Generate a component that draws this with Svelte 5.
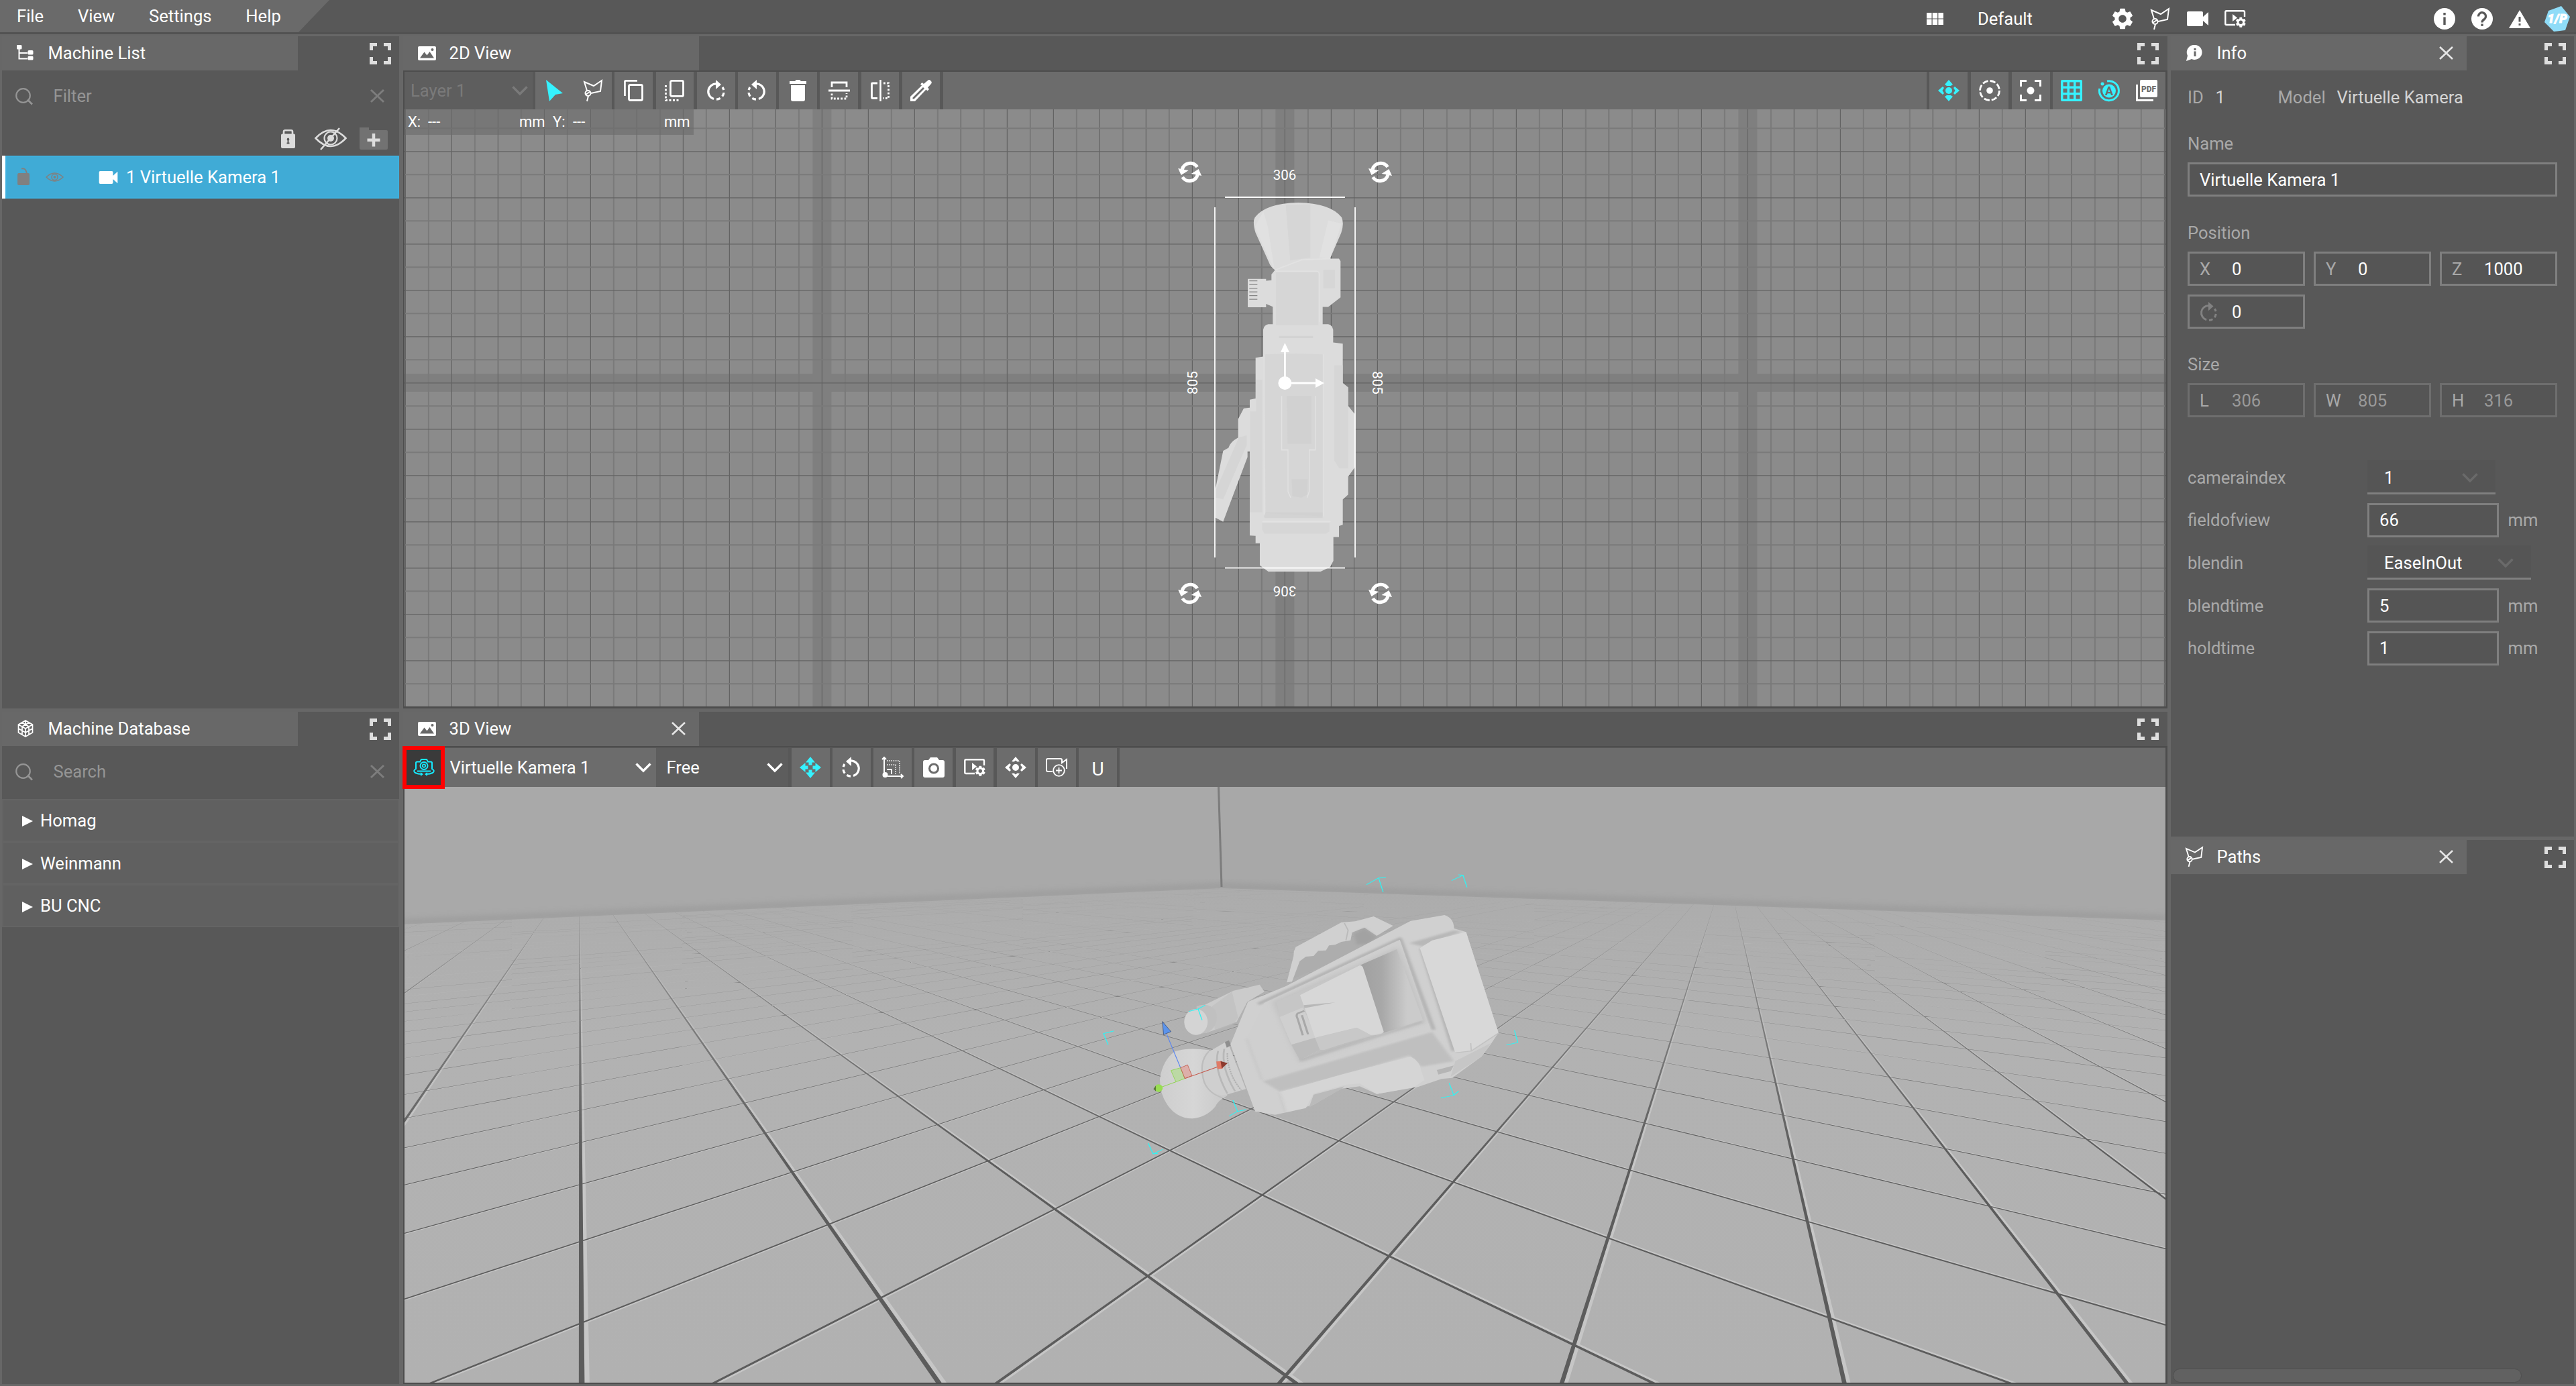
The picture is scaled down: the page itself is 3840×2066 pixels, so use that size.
<script>
  // Icons: [viewBox, width, height, markup]
  const S = 'fill="none" stroke="currentColor"';
  const F = 'fill="currentColor"';
  const gear = 'M19.14 12.94c.04-.3.06-.61.06-.94 0-.32-.02-.64-.07-.94l2.03-1.58c.18-.14.23-.41.12-.61l-1.92-3.32c-.12-.22-.37-.29-.59-.22l-2.39.96c-.5-.38-1.03-.7-1.62-.94l-.36-2.54c-.04-.24-.24-.41-.48-.41h-3.84c-.24 0-.43.17-.47.41l-.36 2.54c-.59.24-1.13.57-1.62.94l-2.39-.96c-.22-.08-.47 0-.59.22L2.74 8.87c-.12.21-.08.47.12.61l2.03 1.58c-.05.3-.09.63-.09.94s.02.64.07.94l-2.03 1.58c-.18.14-.23.41-.12.61l1.92 3.32c.12.22.37.29.59.22l2.39-.96c.5.38 1.03.7 1.62.94l.36 2.54c.05.24.24.41.48.41h3.84c.24 0 .44-.17.47-.41l.36-2.54c.59-.24 1.13-.56 1.62-.94l2.39.96c.22.08.47 0 .59-.22l1.92-3.32c.12-.22.07-.47-.12-.61l-2.01-1.58zM12 15.6c-1.98 0-3.6-1.62-3.6-3.6s1.62-3.6 3.6-3.6 3.6 1.62 3.6 3.6-1.62 3.6-3.6 3.6z';
  const b32 = '0 0 32 32';
  const rotate = `<path ${S} stroke-width="3.2" d="M17 6A11.5 11.5 0 0 0 13 28.5"/><path ${F} d="M16 0L24 7L16 14Z"/><path ${S} stroke-width="3.2" stroke-dasharray="6 4" d="M17 29.2A11.6 11.6 0 0 0 26 11"/>`;
  const lasso = `<path ${S} stroke-width="2" d="M7 16L3 3L17 9L29 1L27 17L13 20M9 24L7 32M5 22L11 18"/><circle ${S} stroke-width="2" cx="8.5" cy="20" r="4"/>`;
  const icons = {
    gear: ['2 2 20 20', 32, 32, `<path ${F} d="${gear}"/>`],
    path: [b32, 32, 32, lasso],
    paths: ['2 1 28 31', 26, 29, lasso],
    video: ['0 0 32 22', 32, 22, `<path ${F} d="M2 0H22Q24 0 24 2V8L32 1V21L24 14V20Q24 22 22 22H2Q0 22 0 20V2Q0 0 2 0Z"/>`],
    playgear: ['0 0 32 26', 32, 26, `<path ${S} stroke-width="2.4" d="M16 22H3Q1.3 22 1.3 20.500V3Q1.300 1.300 3 1.300H28Q30 1.300 30 3V10"/><path ${F} d="M12 6L19 11.500L12 17Z"/><g transform="translate(16.500 10.500) scale(.78) translate(-2 -2)"><path ${F} d="${gear}"/></g>`],
    info: [b32, 32, 32, `<circle cx="16" cy="16" r="16" ${F}/><path fill="#585858" d="M14.300 7h3.400v3.600h-3.400zM14.300 13.500h3.400V25h-3.400z"/>`],
    help: [b32, 32, 32, `<circle cx="16" cy="16" r="16" ${F}/><path fill="none" stroke="#585858" stroke-width="3.2" d="M10.500 12.500A5.500 5.500 0 1 1 19.500 16.500Q16 18.500 16 21.500"/><path fill="#585858" d="M14.400 23.500h3.300v3.400h-3.300z"/>`],
    warn: ['0 0 32 27', 32, 27, `<path ${F} d="M16 0L32 27H0Z"/><path fill="#585858" d="M14.500 10h3v7.500h-3zM14.500 20h3v3h-3z"/>`],
    logo: ['0 0 38 38', 38, 38, `<path fill="#8fdcf8" d="M25 0L38 16L31 36L14 38L0 24L6 7Z"/><text x="19" y="25" text-anchor="middle" font-family="Roboto" font-weight="900" font-style="italic" font-size="18" fill="#fff" stroke="#fff" textLength="29">1/P</text>`],
    apps: ['0 0 25 18', 25, 18, `<path ${F} d="M0 0h7.500v8.400H0zM8.700 0h7.500v8.400H8.700zM17.400 0H25v8.400h-7.600zM0 9.600h7.500V18H0zM8.700 9.600h7.500V18H8.700zM17.400 9.600H25V18h-7.600z"/>`],
    full: [b32, 32, 32, `<path ${S} stroke-width="5" d="M2.500 11V2.500H11M21 2.500H29.500V11M29.500 21V29.500H21M11 29.500H2.500V21"/>`],
    tree: ['0 0 26 24', 26, 24, `<path ${F} d="M1 0h5q1.500 0 1.500 1.500V5Q7.500 6.500 6 6.500H1Q0 6.500 0 5V1Q0 0 1 0zM18 8h5q1.500 0 1.500 1.500v3.500q0 1.500-1.500 1.500h-5q-1.500 0-1.500-1.500V9.500Q16.500 8 18 8zM18 16.500h5q1.500 0 1.500 1.500v3q0 1.500-1.500 1.500h-5q-1.500 0-1.500-1.500v-3q0-1.500 1.500-1.500z"/><path ${S} stroke-width="2" d="M3.500 6V20.500H16M4 12H16"/>`],
    image: ['0 0 27 21', 27, 21, `<path ${F} fill-rule="evenodd" d="M2 0H25Q27 0 27 2V19Q27 21 25 21H2Q0 21 0 19V2Q0 0 2 0ZM3 17.500H24L17.500 8L13.500 13.500L9.500 8.500ZM21.500 3A2 2 0 1 0 21.500 7A2 2 0 1 0 21.500 3Z"/>`],
    cube: ['0 0 26 26', 26, 26, `<path ${S} stroke-width="1.700" d="M13 1L23.500 7V19L13 25L2.500 19V7ZM2.500 7L13 13L23.500 7M13 13V25M7.700 4L18 10V22M18.300 4L8 10V22M2.500 13L13 19L23.500 13M13 1V7"/>`],
    bubble: ['0 0 26 24', 26, 24, `<path ${F} d="M14 0A11 11 0 1 1 9 21L1 24L3 16A11 11 0 0 1 14 0Z"/><path fill="#686868" d="M12.500 5h3v3h-3zM12.500 9.500h3V17h-3z"/>`],
    close: ['0 0 21 20', 21, 20, `<path ${S} stroke-width="2.600" d="M1 1L20 19M20 1L1 19"/>`],
    clear: ['0 0 21 20', 21, 20, `<path ${S} stroke-width="3" d="M1 1L20 19M20 1L1 19"/>`],
    search: ['0 0 26 25', 26, 25, `<ellipse ${S} stroke-width="2.200" cx="11.500" cy="11.500" rx="10.300" ry="10.300"/><path ${S} stroke-width="2.600" d="M18 17.500L25 24.500"/>`],
    lock: ['0 0 21 28', 21, 28, `<path ${S} stroke-width="2.600" d="M4 8V3Q4 1.300 6 1.300H15Q17 1.300 17 3V8"/><path ${F} fill-rule="evenodd" d="M2 6.500H19Q21 6.500 21 8.500V26Q21 28 19 28H2Q0 28 0 26V8.500Q0 6.500 2 6.500ZM10.500 12.500A2.300 2.300 0 0 0 9.500 16.500V19.500H8.500V21.500H12.500V19.500H11.500V16.500A2.300 2.300 0 0 0 10.500 12.500Z"/>`],
    eyeoff: ['0 0 48 34', 48, 34, `<path ${S} stroke-width="2.600" d="M1.500 16Q24-8 46.500 16Q24 40 1.500 16ZM37 1L9 33"/><circle ${S} stroke-width="2.200" cx="24" cy="16" r="9.500"/><circle ${F} cx="24" cy="16" r="5"/>`],
    folder: ['0 0 42 33', 42, 33, `<path fill="#727272" d="M0 0H14V4H40Q42 4 42 6V31Q42 33 40 33H2Q0 33 0 31Z"/><path stroke="currentColor" stroke-width="4.500" d="M21 9V28.500M11.500 18.700H30.500"/>`],
    unlock: ['0 0 18 24', 18, 24, `<path ${F} d="M0 9Q0 6 2 6H16Q18 6 18 8V22Q18 24 16 24H2Q0 24 0 22Z"/><path ${S} stroke-width="2" d="M6 -.500Q13-2.500 14 8"/>`],
    eye: ['0 0 27 14', 27, 14, `<path ${S} stroke-width="1.500" d="M1 7Q13.500-5 26 7Q13.500 19 1 7Z"/><circle ${S} stroke-width="1.500" cx="13.500" cy="7" r="4.500"/><circle ${F} cx="13.500" cy="7" r="2"/>`],
    cursor: ['0 0 25 32', 25, 32, `<path ${F} d="M0 0L25 20L14 22L5 32Z"/>`],
    copy: ['0 0 29 32', 29, 32, `<path ${S} stroke-width="2.800" d="M1.400 24V3Q1.400 1.400 3 1.400H20"/><rect ${S} stroke-width="2.800" x="7.500" y="7.500" width="20" height="23" rx="2"/>`],
    front: ['0 0 29 32', 29, 32, `<rect ${S} stroke-width="2.800" x="8.500" y="1.400" width="19" height="23" rx="2"/><path ${S} stroke-width="2.800" stroke-dasharray="3 2.500" d="M1.500 8V30.500H21"/>`],
    rcw: [b32, 32, 32, rotate],
    rccw: [b32, 32, 32, `<g transform="matrix(-1 0 0 1 32 0)">${rotate}</g>`],
    trash: ['0 0 25 32', 25, 32, `<path ${F} d="M8 2L10 0H15L17 2H25V6H0V2ZM2 8H23V29Q23 32 20 32H5Q2 32 2 29Z"/>`],
    flipv: ['0 0 32 28', 32, 28, `<path ${S} stroke-width="2.800" d="M5 9V2H27V9"/><path ${S} stroke-width="3" d="M0 14H32"/><path ${S} stroke-width="2.800" stroke-dasharray="2.800 2.400" d="M5 18.500V26H27V18"/>`],
    fliph: ['0 0 28 32', 28, 32, `<path ${S} stroke-width="2.800" d="M10 5H3Q1.500 5 1.500 6V26Q1.500 27.500 3 27.500H10"/><path ${S} stroke-width="2.600" d="M14.500 0V32"/><path ${S} stroke-width="2.800" stroke-dasharray="2.800 2.500" d="M19 5H26.500V27.500H18"/>`],
    dropper: [b32, 32, 32, `<path ${F} fill-rule="evenodd" d="M26 1Q28-1 30 1Q33 3.500 31 6L26 11.500L28 14L25.500 16.500L23.500 14.500L7 32H0V25L17 8.500L15 6.500L17.500 4L20 6ZM19 11L3.500 26.500V28.500H5.500L21 13Z"/>`],
    pan: [b32, 32, 32, `<circle ${F} cx="16" cy="16" r="5"/><path ${F} d="M16 0L22 7L18.500 7.500L16 5.500L13.500 7.500L10 7ZM16 32L22 25L18.500 24.500L16 26.500L13.500 24.500L10 25ZM0 16L7 10L9 12L6 16L9 20L7 22ZM32 16L25 10L23 12L26 16L23 20L25 22Z"/>`],
    move: [b32, 32, 32, `<circle ${F} cx="16" cy="16" r="5"/><path ${F} d="M16 0L22 7L19 9H13L10 7ZM16 32L22 25L19 23H13L10 25ZM0 16L7 10L9 12L6.500 16L9 20L7 22ZM32 16L25 10L23 12L25.500 16L23 20L25 22Z"/>`],
    arrows: [b32, 32, 32, `<path ${F} d="M16 0L23 8.500H18.500V12.500H13.500V8.500H9ZM16 32L23 23.500H18.500V19.500H13.500V23.500H9ZM0 16L8.500 9V13.500H12.500V18.500H8.500V23ZM32 16L23.500 9V13.500H19.500V18.500H23.500V23Z"/>`],
    target: [b32, 32, 32, `<circle ${F} cx="16" cy="16" r="4.800"/><circle ${S} stroke-width="2.800" cx="16" cy="16" r="14.500" stroke-dasharray="8.400 3"/>`],
    focus: [b32, 32, 32, `<circle ${F} cx="16" cy="16" r="5.500"/><path ${S} stroke-width="3" d="M1.500 10V1.500H10M22 1.500H30.500V10M30.500 22V30.500H22M10 30.500H1.500V22"/>`],
    grid: [b32, 32, 32, `<path ${F} fill-rule="evenodd" d="M2 0H30Q32 0 32 2V30Q32 32 30 32H2Q0 32 0 30V2Q0 0 2 0ZM3.500 3.500V9.500H9.500V3.500ZM13 3.500V9.500H19V3.500ZM22.500 3.500V9.500H28.500V3.500ZM3.500 13V19H9.500V13ZM13 13V19H19V13ZM22.500 13V19H28.500V13ZM3.500 22.500V28.500H9.500V22.500ZM13 22.500V28.500H19V22.500ZM22.500 22.500V28.500H28.500V22.500Z"/>`],
    auto: [b32, 32, 32, `<path ${S} stroke-width="3" d="M13 2A14.500 14.500 0 1 1 1.800 13"/><circle ${F} cx="6" cy="6" r="2.500"/><circle ${F} cx="16" cy="16.500" r="10"/><text x="16" y="23" text-anchor="middle" font-family="Roboto" font-weight="700" font-size="18" fill="#6c6c6c">A</text>`],
    pdf: [b32, 32, 32, `<path ${F} d="M8 0H30Q32 0 32 2V24Q32 26 30 26H8Q6 26 6 24V2Q6 0 8 0Z"/><path ${S} stroke-width="2.800" d="M1.500 7V30.500H26"/><text x="19" y="17.500" text-anchor="middle" font-family="Roboto" font-weight="900" font-size="12" fill="#6c6c6c">PDF</text>`],
    measure: [b32, 32, 32, `<path ${S} stroke-width="2" d="M3 24V1M0 4L3 1L6 4M8 29H31M28 26L31 29L28 32"/><circle ${F} cx="4.500" cy="27" r="4"/><path ${S} stroke-width="1.600" stroke-dasharray="1.600 1.600" d="M7 6H26V26M7 12H20V26"/><path ${S} stroke-width="1.800" d="M7 19H14V26"/>`],
    photo: ['0 0 32 30', 32, 30, `<path ${F} fill-rule="evenodd" d="M11 0H21L24 4H29Q32 4 32 7V27Q32 30 29 30H3Q0 30 0 27V7Q0 4 3 4H8ZM16 8.500A8 8 0 1 0 16 24.500A8 8 0 1 0 16 8.500Z"/><circle ${F} cx="16" cy="16.500" r="5"/>`],
    camplus: ['0 0 32 28', 32, 28, `<path ${S} stroke-width="2" d="M10 20H3Q1 20 1 18V3Q1 1 3 1H22Q24 1 24 3V7L31 2V16"/><circle ${S} stroke-width="1.800" cx="19.500" cy="18.500" r="8.300"/><path ${S} stroke-width="1.800" d="M19.500 14V23M15 18.500H24"/>`],
    camera3d: ['0 0 32 26', 32, 26, `<path ${S} stroke-width="2" d="M4 16V6Q4 4.500 6 4.500H10L12 1H20L22 4.500H26Q28 4.500 28 6V16M4 15Q-1 18 3 21Q7 23 13 23M28 15Q33 18 29 21Q25 23 19 23M6 18.500H26"/><ellipse ${S} stroke-width="2" cx="16" cy="10.500" rx="5.500" ry="5.500"/><circle ${S} stroke-width="1.700" cx="16" cy="10.500" r="2.200"/><path ${F} d="M11 20L15 23L11 26ZM21 20L17 23L21 26Z"/>`],
    chevron: ['0 0 24 14', 24, 14, `<path ${S} stroke-width="3.400" d="M1.500 1.500L12 12L22.500 1.500"/>`]
  };

  const leftTools = ['copy', 'front', 'rcw', 'rccw', 'trash', 'flipv', 'fliph', 'dropper'];
  const tools3d = ['rccw', 'measure', 'photo', 'playgear', 'pan', 'camplus'];
  const vendors = ['Homag', 'Weinmann', 'BU CNC'];
  const menus = ['File', 'View', 'Settings', 'Help'];

  // 2D drawing grid
  const cell = 34.5;
  const vLines = [], hLines = [];
  for (let i = -40; i <= 40; i++) {
    const x = 1915.4 + i * cell;
    if (x > 603 && x < 3228) vLines.push({ x, dark: i % 2 === 0 });
    const y = 570.8 + i * cell;
    if (y > 163 && y < 1053) hLines.push({ y, dark: (i + 1) % 2 !== 0 });
  }

  // Floor of the 3D scene: tile joints (u, v) and where they land in the view
  const joints = [
    [-2, -1, 158, 1407], [-2, -2, 158, 1195], [-2, -3, 158, 1048],
    [-1, 0, 423, 1340], [-1, -1, 378, 1150], [-1, -2, 345, 1017], [-1, -3, 321, 915],
    [0, -1, 518, 988], [0, 0, 577, 1111], [0, 1, 660, 1283], [0, 2, 782, 1543],
    [1, -1, 617, 873], [1, 0, 679, 960], [1, 1, 761, 1075], [1, 2, 873, 1232], [1, 3, 1037, 1463],
    [2, 0, 751, 853], [2, 1, 829, 936], [2, 2, 930, 1042], [2, 3, 1068, 1187], [2, 4, 1264, 1392],
    [3, 1, 878, 835], [3, 2, 969, 912], [3, 3, 1087, 1011], [3, 4, 1243, 1142], [3, 5, 1465, 1329]
  ].map(([u, v, a, b]) => [u, v, (600 + a * 1.68367) / 1000, (1160 + b * 0.57781) / 1000]);

  function solve(A, b) {
    const n = b.length;
    for (let i = 0; i < n; i++) {
      let p = i;
      for (let r = i + 1; r < n; r++) if (Math.abs(A[r][i]) > Math.abs(A[p][i])) p = r;
      [A[i], A[p]] = [A[p], A[i]];
      [b[i], b[p]] = [b[p], b[i]];
      for (let r = 0; r < n; r++) {
        if (r === i) continue;
        const f = A[r][i] / A[i][i];
        for (let c = i; c < n; c++) A[r][c] -= f * A[i][c];
        b[r] -= f * b[i];
      }
    }
    return b.map((x, i) => x / A[i][i]);
  }
  const rows = [];
  for (const [u, v, x, y] of joints) {
    rows.push([[u, v, 1, 0, 0, 0, -u * x, -v * x], x]);
    rows.push([[0, 0, 0, u, v, 1, -u * y, -v * y], y]);
  }
  const N = Array.from({ length: 8 }, () => Array(8).fill(0));
  const rhs = Array(8).fill(0);
  for (const [r, t] of rows)
    for (let i = 0; i < 8; i++) {
      rhs[i] += r[i] * t;
      for (let j = 0; j < 8; j++) N[i][j] += r[i] * r[j];
    }
  const H = solve(N, rhs);
  const depth = (u, v) => H[6] * u + H[7] * v + 1;
  const project = (u, v) => {
    const w = depth(u, v);
    return `${((1000 * (H[0] * u + H[1] * v + H[2])) / w).toFixed(1)} ${((1000 * (H[3] * u + H[4] * v + H[5])) / w).toFixed(1)}`;
  };
  const cx = 1.821, cy = 1.324;
  const [uc, vc] = solve(
    [[H[0] - H[6] * cx, H[1] - H[7] * cx], [H[3] - H[6] * cy, H[4] - H[7] * cy]],
    [cx - H[2], cy - H[5]]
  );
  const NEAR = 0.12;
  function strip(along, k, o1, o2) {
    const pt = (t, o) => (along === 'v' ? [k + o, t] : [t, k + o]);
    const start = along === 'v' ? vc - 1 : uc + 1;
    const dir = along === 'v' ? 1 : -1;
    const w0 = depth(...pt(start, 0));
    const dw = depth(...pt(start + dir, 0)) - w0;
    if (w0 < NEAR) return '';
    const len = dw < 0 ? Math.min(90, (NEAR - w0) / dw) : 90;
    const end = start + dir * len;
    return `M${project(...pt(start, o1))}L${project(...pt(end, o1))}L${project(...pt(end, o2))}L${project(...pt(start, o2))}Z`;
  }
  let joint = '', bevel = '';
  for (let i = Math.floor(uc); i > uc - 60; i--) {
    joint += strip('v', i, -0.008, 0.008);
    bevel += strip('v', i, 0.008, 0.022);
  }
  for (let j = Math.ceil(vc); j < vc + 60; j++) {
    joint += strip('u', j, -0.008, 0.008);
    bevel += strip('u', j, 0.008, 0.022);
  }
</script>

{#snippet ic(name, cls = '')}
  <svg class="ic {cls}" viewBox={icons[name][0]} width={icons[name][1]} height={icons[name][2]}>{@html icons[name][3]}</svg>
{/snippet}

{#snippet header(icon, title, closable)}
  <div class="head">
    <div class="tab">
      <span class="tabicon">{@render ic(icon)}</span>
      <span class="title">{title}</span>
      {#if closable}{@render ic('close', 'x')}{/if}
    </div>
    {@render ic('full', 'full')}
  </div>
{/snippet}

{#snippet field(label, value, off)}
  <div class="field" class:off>
    {#if label === 'rot'}<span class="key rot">{@render ic('rcw')}</span>{:else}<span class="key">{label}</span>{/if}
    <span>{value}</span>
  </div>
{/snippet}

{#snippet spin(x, y)}
  <g transform="translate({x} {y})" fill="#fff">
    <path d="M-11.500 -4A12.500 12.500 0 0 1 11 -7.500" fill="none" stroke="#fff" stroke-width="5" />
    <path d="M11.500 4A12.500 12.500 0 0 1 -11 7.500" fill="none" stroke="#fff" stroke-width="5" />
    <path d="M-17.500 -5.500L-2 -2.500L-13 4.500ZM17.500 5.500L2 2.500L13 -4.500Z" />
  </g>
{/snippet}

<div class="app">
  <header class="menubar">
    <nav>
      {#each menus as m}<span>{m}</span>{/each}
    </nav>
    <div class="layout">{@render ic('apps')}<span>Default</span></div>
    <div class="group">
      {#each ['gear', 'path', 'video', 'playgear'] as n}<span class="slot">{@render ic(n)}</span>{/each}
    </div>
    <div class="group last">
      {#each ['info', 'help', 'warn', 'logo'] as n}<span class="slot">{@render ic(n)}</span>{/each}
    </div>
  </header>

  <main>
    <section class="col left">
      <div class="panel list">
        {@render header('tree', 'Machine List', false)}
        <div class="search">{@render ic('search')}<span>Filter</span>{@render ic('clear', 'clear')}</div>
        <div class="listtools">{@render ic('lock')}{@render ic('eyeoff')}{@render ic('folder')}</div>
        <div class="machine">
          {@render ic('unlock', 'dim')}{@render ic('eye', 'dim eye')}
          <svg class="ic cam" viewBox="0 0 32 22" width="29" height="19">{@html icons.video[3]}</svg>
          <span>1 Virtuelle Kamera 1</span>
        </div>
      </div>
      <div class="panel grow">
        {@render header('cube', 'Machine Database', false)}
        <div class="search db">{@render ic('search')}<span>Search</span>{@render ic('clear', 'clear')}</div>
        {#each vendors as v}
          <div class="vendor"><i></i><span>{v}</span></div>
        {/each}
      </div>
    </section>

    <section class="col centre">
      <div class="panel list">
        {@render header('image', '2D View', false)}
        <div class="frame">
          <div class="toolbar">
            <div class="layer"><span>Layer 1</span>{@render ic('chevron')}</div>
            <div class="pair"><span class="btn cyan">{@render ic('cursor')}</span><span class="btn">{@render ic('path')}</span></div>
            {#each leftTools as t}<span class="btn">{@render ic(t)}</span>{/each}
            <span class="fill"></span>
            <span class="btn cyan">{@render ic('move')}</span>
            <span class="btn">{@render ic('target')}</span>
            <span class="btn">{@render ic('focus')}</span>
            <div class="pair narrow"><span class="btn cyan">{@render ic('grid')}</span><span class="btn cyan">{@render ic('auto')}</span><span class="btn">{@render ic('pdf')}</span></div>
          </div>
          <div class="view">
            <svg viewBox="603 163 2625 890" width="2625" height="890">
              <rect x="603" y="163" width="2625" height="890" fill="#8b8b8b" />
              <g fill="#7f7f7f">
                {#each [1225.4, 1915.4, 2605.4] as x}<rect x={x - 14} y="163" width="28" height="890" />{/each}
                <rect x="603" y="557" width="2625" height="27" />
              </g>
              {#each vLines as l}<path d="M{l.x} 163V1053" stroke={l.dark ? '#636363' : '#7a7a7a'} stroke-width={l.dark ? 1.2 : 2} />{/each}
              {#each hLines as l}<path d="M603 {l.y}H3228" stroke={l.dark ? '#636363' : '#7a7a7a'} stroke-width={l.dark ? 1.2 : 2} />{/each}
              <g transform="translate(1700 200) scale(.33333 .45918)">
                <path fill="#dcdcdc" d="M489 862L515 858V726L549 722V635Q552 620 572 617H592V560L562 551V562H480V470H562V476L586 474V455L602 441Q582 432 574 415L515 320Q500 285 512 270Q560 224 706 222Q850 224 900 270Q912 290 898 320L848 404H888L895 412V530L840 561H815V617H840Q858 620 862 635V676L905 680V808L929 822V882L960 910V1080L929 1112V1170L905 1186V1268L888 1272V1308H863V1385L848 1405L806 1420H572L534 1400V1328H515V1304L489 1303V1030H479V1048L370 1258L336 1245V1150L370 1028L394 1018Q400 1000 437 985V925L462 890L489 888Z" />
                <path fill="#d4d4d4" opacity=".8" d="M606 445H796V620H606ZM553 715L700 712L815 715V1240L560 1230ZM517 797H545V1228H490V900H517ZM867 750H905V808L929 822V1085L890 1085L867 1060ZM545 1262H845V1290L830 1297H555L545 1285Z" />
                <path fill="none" stroke="#e2e2e2" stroke-width="4" d="M602 441L720 408L850 404M606 445H790Q802 445 802 465V610M553 715V1235M820 715V1240M545 1258H850M632 850V1025H660V1160L672 1180M782 850V1025H755V1160L745 1180" />
                <path fill="#cfcfcf" opacity=".7" d="M655 850L658 1005H765V850ZM676 1120H748L745 1170L720 1180L680 1175ZM620 655H772V662H620ZM553 1240L560 1228H815V1246H555Z" />
                <path fill="#d2d2d2" d="M440 985L475 978V1010L370 1185L338 1180V1155Z" opacity=".7" />
                <path fill="#e2e2e2" opacity=".7" d="M512 300Q540 350 600 441L570 300L550 250ZM900 290L848 404L800 400L840 280Z" />
                <path fill="#d2d2d2" opacity=".6" d="M818 440H870V500H818ZM650 230L760 228V400L670 410Z" />
                <path stroke="#868686" stroke-width="3" d="M487 476H523M487 488H523M487 500H523M487 512H523M487 524H523M487 536H523" />
              </g>
              <g stroke="#fff" stroke-width="1.800">
                <path d="M1826 294H2005M1826 846.700H2005M1811 309V831M2020 309V831" />
                <path d="M1915.400 571V522M1915.400 571H1962" stroke-width="2.800" />
              </g>
              <circle cx="1915.400" cy="571" r="10" fill="#fff" />
              <path fill="#fff" d="M1915.400 511L1922 525H1909ZM1974 571L1961 578V564Z" />
              {@render spin(1773.7, 256.5)}{@render spin(2057.5, 256.5)}
              {@render spin(1773.7, 884.5)}{@render spin(2057.5, 884.5)}
              <g fill="#fff" font-size="20.500" text-anchor="middle">
                <text x="1915" y="268">306</text>
                <text transform="translate(1915 873.500) rotate(180)">306</text>
                <text transform="translate(1785 570.600) rotate(-90)">805</text>
                <text transform="translate(2045.500 570.600) rotate(90)">805</text>
              </g>
            </svg>
            <div class="coords"><span class="k">X:</span><span class="v">---</span><span class="u">mm</span><span class="k">Y:</span><span class="v">---</span><span>mm</span></div>
          </div>
        </div>
      </div>

      <div class="panel grow">
        {@render header('image', '3D View', true)}
        <div class="frame">
          <div class="toolbar t3d">
            <span class="marked">{@render ic('camera3d')}</span>
            <div class="sel cam3">Virtuelle Kamera 1{@render ic('chevron')}</div>
            <div class="sel free">Free{@render ic('chevron')}</div>
            <span class="btn cyan">{@render ic('arrows')}</span>
            {#each tools3d as t}<span class="btn">{@render ic(t)}</span>{/each}
            <span class="btn big">U</span>
            <span class="fill"></span>
          </div>
          <svg class="scene" viewBox="603 1173 2625 888" width="2625" height="888">
            <defs>
              <linearGradient id="floor" x1="0" y1="0" x2="0" y2="1"><stop offset="0" stop-color="#acacac" /><stop offset=".3" stop-color="#b2b2b2" /><stop offset="1" stop-color="#b1b1b1" /></linearGradient>
              <linearGradient id="fade" gradientUnits="userSpaceOnUse" x1="0" y1="1324" x2="0" y2="1900">
                <stop offset="0" stop-color="#fff" stop-opacity=".1" /><stop offset=".25" stop-color="#fff" stop-opacity=".5" /><stop offset=".7" stop-color="#fff" stop-opacity="1" />
              </linearGradient>
              <mask id="m" maskUnits="userSpaceOnUse" x="603" y="1173" width="2625" height="888"><rect x="603" y="1173" width="2625" height="888" fill="url(#fade)" /></mask>
              <clipPath id="c"><path d="M600 1378L1821 1324L3230 1372V2066H600Z" /></clipPath>
              <filter id="b3" x="-20%" y="-20%" width="140%" height="140%"><feGaussianBlur stdDeviation="5" /></filter>
              <filter id="b7" x="-30%" y="-30%" width="160%" height="160%"><feGaussianBlur stdDeviation="10" /></filter>
              <linearGradient id="shade" x1="0" y1="0" x2="1" y2="0"><stop offset="0" stop-color="#a0a0a0" /><stop offset=".35" stop-color="#a8a8a8" /><stop offset=".75" stop-color="#cbcbcb" /></linearGradient>
              <linearGradient id="lens" x1="0" y1="0" x2="1" y2="0"><stop offset="0" stop-color="#cecece" /><stop offset=".5" stop-color="#d6d6d6" /><stop offset="1" stop-color="#c8c8c8" /></linearGradient>
            </defs>
            <rect x="603" y="1173" width="2625" height="888" fill="#a9a9a9" />
            <path d="M1816 1173L1821 1324L3230 1372V1173Z" fill="#a8a8a8" />
            <path d="M600 1375L1821 1321L3230 1369" fill="none" stroke="#8c8c8c" stroke-width="8" filter="url(#b3)" opacity=".5" />
            <path d="M1816.500 1173L1821 1322" stroke="#7c7c7c" stroke-width="3" />
            <path d="M600 1378L1821 1324L3230 1372V2066H600Z" fill="url(#floor)" />
            <g clip-path="url(#c)"><g mask="url(#m)">
              <path d={bevel} fill="#c6c6c6" />
              <path d={joint} fill="#5c5c5c" />
            </g></g>

            <g transform="translate(1600 1280) scale(.45918 .33333)">
              <!-- lens -->
              <path fill="url(#lens)" d="M330 862Q370 842 440 856L500 1060Q470 1080 460 1110Q430 1158 385 1162Q335 1160 305 1100Q280 1050 281 985Q290 900 330 862Z" />
              <path fill="#cfcfcf" d="M425 875L500 815L560 1030L490 1058Q450 1060 425 1000Q410 930 425 875Z" />
              <path fill="none" stroke="#b8b8b8" stroke-width="6" d="M470 860Q455 940 500 1050M490 850Q478 930 525 1040" />
              <path fill="none" stroke="#b0b0b0" stroke-width="5" stroke-dasharray="6 4" d="M500 870Q500 960 545 1035" />
              <path fill="none" stroke="#bdbdbd" stroke-width="5" d="M440 862Q405 910 425 1000Q440 1050 485 1070" />
              <path fill="#8f8f8f" d="M492 820L505 812L512 835L498 845Z" />
              <!-- viewfinder -->
              <path fill="#cbcbcb" d="M425 655L520 590L605 563L620 595L565 640L530 730L430 780Z" />
              <path fill="#bcbcbc" d="M515 595L535 710L520 740L460 770L450 660Z" opacity=".5" />
              <path fill="#c0c0c0" d="M400 660Q440 640 462 680Q475 740 440 775L400 788Z" />
              <ellipse fill="#d4d4d4" cx="398" cy="730" rx="38" ry="58" />
              <!-- handle -->
              <path fill="#adadad" d="M695 552L720 430L880 370L960 310L1000 340L985 380L740 520Z" />
              <path fill="#d0d0d0" d="M716 415L722 395L870 285L915 280L975 258L1038 300L985 345L945 308L905 330L900 365L870 372L850 385L830 388L820 410L795 412L780 435L755 438L735 458L710 550L693 553L715 435Z" />
              <path fill="none" stroke="#bababa" stroke-width="4" d="M880 288L892 320L885 365" />
              <path fill="#999" opacity=".5" filter="url(#b3)" d="M910 335L945 310L985 350L960 380L920 385Z" />
              <!-- body -->
              <path fill="#d0d0d0" d="M510 830L567 640L690 570L1095 278L1205 252Q1235 265 1236 312L1275 328L1380 778L1355 830L1325 885L1230 980L1195 985L1120 1020L985 1052L930 1018L870 1028L780 1100L690 1135L655 1145L590 1130Z" />
              <path fill="#b8b8b8" filter="url(#b3)" d="M1090 378L1236 320L1260 326L1135 392Z" />
              <path fill="none" stroke="#b0b0b0" stroke-width="12" filter="url(#b3)" d="M600 650L1065 355M1062 360L1170 765M1130 400L1235 860" />
              <path fill="#cfcfcf" d="M562 805L620 645L1060 362L1160 765L612 990Z" />
              <path fill="#bfbfbf" filter="url(#b3)" d="M615 995L1165 775L1235 905L1130 930L1090 880L860 975L670 1040Z" />
              <path fill="#a9a9a9" opacity=".35" filter="url(#b7)" d="M645 640L930 470L1055 395L1145 730L1010 785L735 910Z" />
              <path fill="#c6c6c6" d="M660 640L1050 405L1135 722L735 902L705 830L670 708Z" />
              <path fill="url(#shade)" d="M930 477L1050 405L1135 722L1005 780Z" />
              <path fill="#cfcfcf" d="M670 708L745 665L790 800L708 832Z" />
              <path fill="none" stroke="#a8a8a8" stroke-width="7" d="M750 680L728 692Q722 700 728 715L745 790M742 700L762 785" />
              <path fill="#bcbcbc" d="M708 832L785 800L800 855L735 900Z" />
              <path fill="#bebebe" d="M800 855L1005 780L1135 722L735 902Z" />
              <path fill="#d7d7d7" d="M736 610L930 477Q936 475 940 485L1008 775Q1000 790 965 788L920 755L785 800Z" />
              <path fill="#c8c8c8" d="M785 802L920 757L965 788L815 855H802Z" />
              <path fill="#b8b8b8" d="M748 655L850 643L750 668Z" />
              <path fill="none" stroke="#a4a4a4" stroke-width="6" opacity=".6" filter="url(#b3)" d="M735 905L1133 730" />
              <!-- battery -->
              <path fill="#d8d8d8" d="M1125 400L1165 365L1275 328L1380 778L1290 858L1240 868Z" />
              <path fill="none" stroke="#c2c2c2" stroke-width="4" d="M1380 780L1292 860L1240 868M1292 860L1290 825" />
              <path fill="#c6c6c6" d="M1355 825L1240 905L1225 975L1325 885Z" />
              <path fill="#a4a4a4" opacity=".6" d="M1180 945L1235 925L1225 950L1185 965Z" />
              <!-- foot -->
              <path fill="#d5d5d5" d="M668 1045L870 965L1095 885Q1125 905 1130 950L1140 990L1105 1022L985 1052L930 1005L885 1010L780 1050L755 1115L690 1135Z" />
              <path fill="#bababa" d="M780 1055L880 1018L870 1030L765 1112Z" />
              <path fill="none" stroke="#bcbcbc" stroke-width="4" opacity=".7" filter="url(#b3)" d="M562 805L612 990M670 1045L690 1135" />
              <!-- gizmo -->
              <path stroke="#5a86f0" stroke-width="2.600" d="M303 785L348 935" />
              <path fill="#5b93ea" stroke="#1d2c55" stroke-width="1.500" d="M289 728L317 773L293 787Z" />
              <path stroke="#c4574a" stroke-width="2.600" d="M362 983L470 930" />
              <path fill="#e07a66" d="M464 907L482 905L485 938L468 941Z" /><path fill="#8c3a2e" d="M478 905L501 914L482 938Z" />
              <path stroke="#8bd44a" stroke-width="2.600" d="M333 998L285 1022" />
              <ellipse cx="277" cy="1026" rx="13" ry="17" fill="#98dd52" /><path fill="#587a35" d="M260 1030L268 1015V1040Z" />
              <path fill="#a5e078" fill-opacity=".5" stroke="#8bd44a" stroke-width="2" d="M317 947L348 935L362 983L333 998Z" />
              <path fill="#e68a80" fill-opacity=".5" stroke="#c4574a" stroke-width="2" d="M348 935L371 922L385 970L362 983Z" />
              <path fill="none" stroke="#31f3f3" stroke-width="3" d="M952 116L991 86L1015 85M991 86L1006 150M1228 98L1265 74L1250 72M1265 74L1278 128M375 683L405 672L428 655M405 672L418 722M132 770L98 782L113 832M1432 768L1443 822L1406 833M1220 1003L1235 1058L1193 1070M1235 1058L1251 1039M518 1080L533 1130L506 1151M533 1130L560 1122M243 1272L259 1320L290 1300M259 1320L275 1318" />
            </g>
          </svg>
        </div>
      </div>
    </section>

    <section class="col right">
      <div class="panel info">
        {@render header('bubble', 'Info', true)}
        <div class="form">
          <div class="idrow"><span class="lab id">ID</span><span class="idv">1</span><span class="lab mod">Model</span><span>Virtuelle Kamera</span></div>
          <div class="lab cap">Name</div>
          <div class="field">Virtuelle Kamera 1</div>
          <div class="lab cap pos">Position</div>
          <div class="trio">
            {@render field('X', '0', false)}{@render field('Y', '0', false)}{@render field('Z', '1000', false)}{@render field('rot', '0', false)}
          </div>
          <div class="lab cap size">Size</div>
          <div class="trio">
            {@render field('L', '306', true)}{@render field('W', '805', true)}{@render field('H', '316', true)}
          </div>
          <div class="props">
            <div class="prop"><span class="lab">cameraindex</span><div class="drop d1">1{@render ic('chevron')}</div></div>
            <div class="prop"><span class="lab">fieldofview</span><div class="field">66</div><span class="lab mm">mm</span></div>
            <div class="prop"><span class="lab">blendin</span><div class="drop d2">EaseInOut{@render ic('chevron')}</div></div>
            <div class="prop"><span class="lab">blendtime</span><div class="field">5</div><span class="lab mm">mm</span></div>
            <div class="prop"><span class="lab">holdtime</span><div class="field">1</div><span class="lab mm">mm</span></div>
          </div>
        </div>
      </div>
      <div class="panel paths grow">
        {@render header('paths', 'Paths', true)}
        <div class="scroll"></div>
      </div>
    </section>
  </main>
</div>

<style>
  :global(body) { margin: 0; background: #666; }
  .app { width: 3840px; height: 2066px; display: flex; flex-direction: column; overflow: hidden; background: #676767; color: #fff; font-family: Roboto, "Liberation Sans", sans-serif; font-size: 25.6px; line-height: 30px; box-sizing: border-box; white-space: nowrap; }
  .app *, .app :global(*) { box-sizing: border-box; }
  .ic { display: block; flex: none; overflow: visible; }
  .menubar { height: 51px; flex: none; display: flex; background: #585858; border-bottom: 3px solid #525252; }
  nav { width: 491px; display: flex; padding-left: 25px; gap: 50.800px; line-height: 49px; background: #6a6a6a; clip-path: polygon(0 0, 491px 0, 445px 48px, 0 48px); }
  .layout { margin-left: auto; width: 276px; display: flex; align-items: center; gap: 51px; height: 55px; color: #fff; }
  .group { display: flex; gap: 24px; height: 56px; align-items: center; margin-right: 280px; }
  .group.last { margin-right: 12px; }
  .slot { width: 32px; display: flex; justify-content: center; }
  main { flex: 1; display: flex; padding: 3px; min-height: 0; }
  .col { display: flex; flex-direction: column; gap: 5px; flex: none; }
  .left { width: 592px; margin-right: 6px; }
  .centre { width: 2630px; margin-right: 5px; }
  .right { width: 601px; }
  .panel { background: #585858; display: flex; flex-direction: column; }
  .list { height: 1002px; flex: none; }
  .grow { flex: 1; min-height: 0; }
  .head { height: 51px; flex: none; display: flex; align-items: center; justify-content: space-between; padding-right: 12px; color: #dedede; }
  .centre .head { padding-right: 13px; }
  .tab { width: 441px; height: 51px; background: #686868; display: flex; align-items: center; padding: 0 20px 1px 22px; color: #fff; }
  .tabicon { width: 46.500px; display: flex; }
  .tab :global(.x) { margin-left: auto; color: #e6e6e6; }
  .search { height: 76px; display: flex; align-items: center; padding: 0 22px 0 20px; color: #959595; }
  .search.db { height: 79px; padding-bottom: 3px; }
  .search span { margin-left: 30.500px; }
  .search :global(.clear) { margin-left: auto; color: #7d7d7d; }
  .listtools { height: 51px; display: flex; align-items: center; justify-content: flex-end; padding-right: 17px; gap: 19px; color: #dcdcdc; }
  .listtools :global(.ic:first-child) { margin-right: 10px; }
  .machine { height: 64px; background: #40abd6; border-left: 5px solid #fff; display: flex; align-items: center; padding-left: 18px; box-shadow: inset 0 0 0 2px #3fb0de; }
  .machine :global(.dim) { color: #808080; }
  .machine :global(.eye) { margin: 0 52px 0 24px; }
  .machine span { margin-left: 12px; }
  .vendor { height: 63.700px; display: flex; align-items: center; padding-left: 28px; background: #606060; border: 2px solid #646464; }
  .vendor i { border: solid transparent; border-width: 8px 0 8px 16px; border-left-color: #fff; margin-right: 11px; margin-top: 3px; }
  .frame { flex: 1; display: flex; flex-direction: column; border: solid #4d4d4d; border-width: 2px 3px 3px 2px; min-height: 0; }
  .toolbar { height: 56px; flex: none; display: flex; gap: 4.400px; background: #585858; }
  .btn { width: 56.800px; flex: none; display: flex; align-items: center; justify-content: center; background: #6c6c6c; }
  .pair { display: flex; }
  .narrow .btn { width: 56px; }
  .fill { flex: 1; background: #6c6c6c; }
  .cyan { color: #35f2ff; }
  .layer { width: 191px; background: #5e5e5e; color: #7a7a7a; display: flex; align-items: center; justify-content: space-between; padding: 0 7px 0 9px; }
  .view { position: relative; }
  .view svg, .scene { display: block; flex: none; }
  .coords { position: absolute; left: 0; top: 0; width: 431px; height: 38px; background: rgba(106, 106, 106, .6); display: flex; font-size: 22px; line-height: 38px; padding-left: 5px; }
  .k { width: 30px; }
  .v { width: 136px; }
  .u { width: 50px; }
  .t3d { height: 59px; padding-top: 1px; }
  .marked { width: 63px; height: 64px; margin: -3px -6px 0 -3px; border: 6px solid #f00; background: #3a3a3a; color: #15eaff; display: flex; align-items: center; justify-content: center; flex: none; position: relative; z-index: 1; }
  .sel { display: flex; align-items: center; justify-content: space-between; }
  .cam3 { width: 317px; background: #6c6c6c; padding: 0 7px 0 9px; margin-right: -4.400px; }
  .free { width: 197px; background: #5d5d5d; padding: 0 8px 0 15px; }
  .big { font-size: 28px; padding-top: 6px; }
  .info { height: 1193px; flex: none; }
  .form { padding: 24px 25px 0 25px; }
  .lab { color: #a9a9a9; }
  .idrow { display: flex; height: 32px; line-height: 32px; color: #d4d4d4; }
  .id { width: 41.500px; }
  .idv { width: 93px; }
  .mod { width: 88px; }
  .cap { margin-top: 38px; height: 43px; line-height: 30px; }
  .pos { margin-top: 39px; }
  .size { margin-top: 38px; }
  .field { height: 51px; border: 3px solid #7f7f7f; background: #555; display: flex; align-items: center; padding-left: 15px; }
  .trio { display: grid; grid-template-columns: repeat(3, 175px); column-gap: 13px; row-gap: 13px; }
  .key { width: 48px; color: #a9a9a9; }
  .rot { color: #828282; }
  .rot :global(.ic) { width: 30px; height: 30px; margin-left: -2px; }
  .off { border-color: #6e6e6e; color: #999; }
  .props { margin-top: 64px; display: flex; flex-direction: column; gap: 12.700px; }
  .prop { display: flex; align-items: center; height: 51px; }
  .prop > .lab:first-child { width: 268px; }
  .prop .field { width: 196px; }
  .prop .mm { margin-left: 13.500px; }
  .drop { height: 51px; background: #555; border-bottom: 3px solid #808080; padding: 3px 26px 0 25px; display: flex; align-items: center; justify-content: space-between; }
  .drop :global(.ic) { color: #6a6a6a; }
  .d1 { width: 191px; }
  .d2 { width: 244px; }
  .paths { padding-bottom: 2px; }
  .scroll { margin: auto 0 0 3px; width: 520px; height: 21px; border-radius: 11px; background: #616161; border: 1px solid #4e4e4e; }
</style>
